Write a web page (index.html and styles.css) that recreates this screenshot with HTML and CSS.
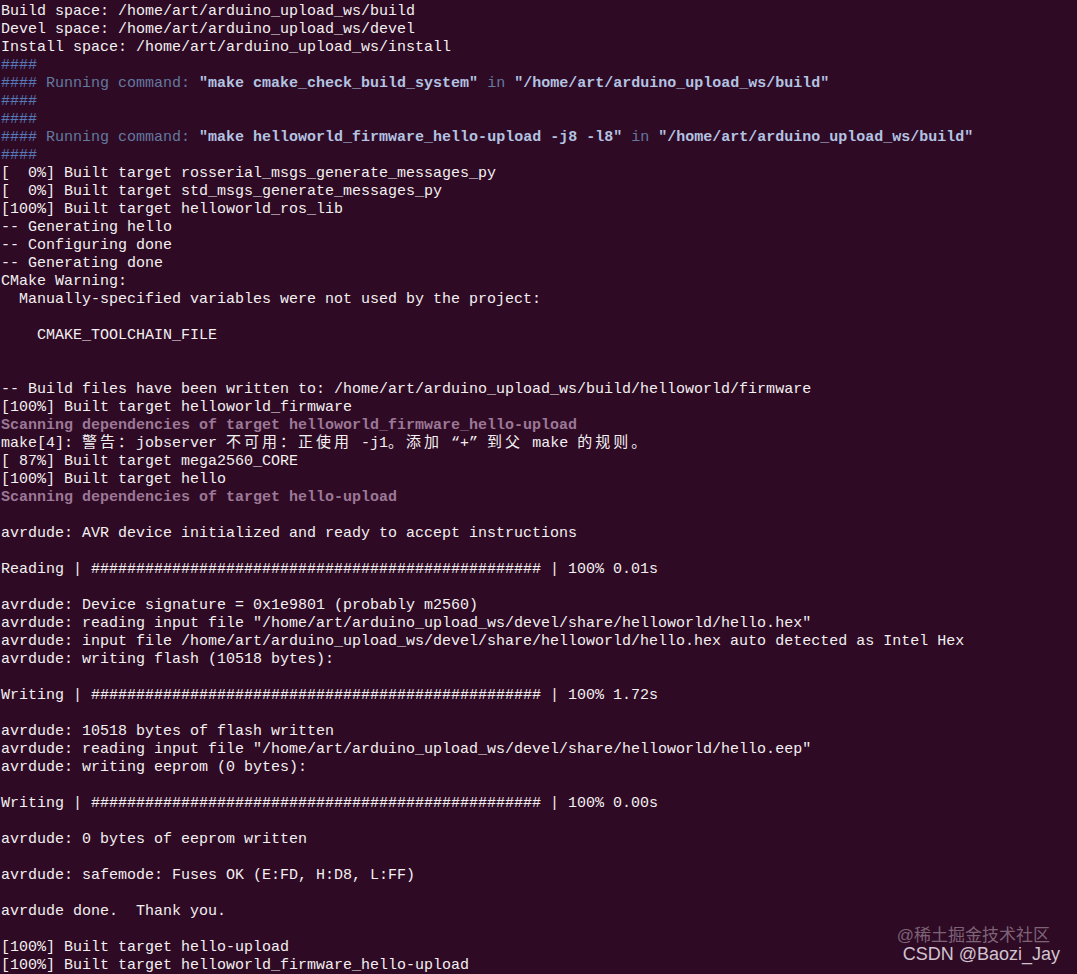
FILE: index.html
```html
<!DOCTYPE html>
<html lang="en">
<head>
<meta charset="utf-8">
<title>Terminal</title>
<link rel="stylesheet" href="styles.css">
</head>
<body>
<div class="term">
<pre class="out">Build space: /home/art/arduino_upload_ws/build
Devel space: /home/art/arduino_upload_ws/devel
Install space: /home/art/arduino_upload_ws/install
<span class="h">####</span>
<span class="h">####</span> <span class="rc">Running command:</span> <span class="cmd">"make cmake_check_build_system"</span> <span class="rc">in</span> <span class="cmd">"/home/art/arduino_upload_ws/build"</span>
<span class="h">####</span>
<span class="h">####</span>
<span class="h">####</span> <span class="rc">Running command:</span> <span class="cmd">"make helloworld_firmware_hello-upload -j8 -l8"</span> <span class="rc">in</span> <span class="cmd">"/home/art/arduino_upload_ws/build"</span>
<span class="h">####</span>
[  0%] Built target rosserial_msgs_generate_messages_py
[  0%] Built target std_msgs_generate_messages_py
[100%] Built target helloworld_ros_lib
-- Generating hello
-- Configuring done
-- Generating done
CMake Warning:
  Manually-specified variables were not used by the project:

    CMAKE_TOOLCHAIN_FILE


-- Build files have been written to: /home/art/arduino_upload_ws/build/helloworld/firmware
[100%] Built target helloworld_firmware
<span class="scan">Scanning dependencies of target helloworld_firmware_hello-upload</span>
make[4]: <span class="cjk">警告：</span>jobserver <span class="cjk">不可用：正使用</span> -j1<span class="cjk">。添加</span> “+” <span class="cjk">到父</span> make <span class="cjk">的规则。</span>
[ 87%] Built target mega2560_CORE
[100%] Built target hello
<span class="scan">Scanning dependencies of target hello-upload</span>

avrdude: AVR device initialized and ready to accept instructions

Reading | ################################################## | 100% 0.01s

avrdude: Device signature = 0x1e9801 (probably m2560)
avrdude: reading input file "/home/art/arduino_upload_ws/devel/share/helloworld/hello.hex"
avrdude: input file /home/art/arduino_upload_ws/devel/share/helloworld/hello.hex auto detected as Intel Hex
avrdude: writing flash (10518 bytes):

Writing | ################################################## | 100% 1.72s

avrdude: 10518 bytes of flash written
avrdude: reading input file "/home/art/arduino_upload_ws/devel/share/helloworld/hello.eep"
avrdude: writing eeprom (0 bytes):

Writing | ################################################## | 100% 0.00s

avrdude: 0 bytes of eeprom written

avrdude: safemode: Fuses OK (E:FD, H:D8, L:FF)

avrdude done.  Thank you.

[100%] Built target hello-upload
[100%] Built target helloworld_firmware_hello-upload</pre>
<div class="wm">
<div class="wm1">@稀土掘金技术社区</div>
<div class="wm2">CSDN @Baozi_Jay</div>
</div>
</div>
</body>
</html>
```
FILE: styles.css
```css
html, body {
  margin: 0;
  padding: 0;
  background: #2f0a24;
}
.term {
  position: relative;
  width: 1077px;
  height: 974px;
  overflow: hidden;
  background: #2f0a24;
}
.out {
  margin: 0;
  padding: 3px 0 0 1px;
  font-family: "Liberation Mono", "DejaVu Sans Mono", monospace;
  font-size: 15px;
  line-height: 18px;
  color: #f2f0f1;
  white-space: pre;
}
.h {
  color: #5679b8;
}
.rc {
  color: #6379a0;
}
.cmd {
  color: #b3c3e2;
  font-weight: bold;
}
.scan {
  color: #9c7897;
  font-weight: bold;
}
.cjk {
  font-family: "Noto Sans CJK SC", sans-serif;
  font-size: 15px;
  line-height: 12px;
  letter-spacing: 3px;
}
.wm {
  position: absolute;
  right: 17px;
  bottom: 11px;
  display: flex;
  flex-direction: column;
  align-items: flex-end;
  font-family: "Liberation Sans", "Noto Sans CJK SC", sans-serif;
  line-height: 18px;
}
.wm1 {
  font-size: 17px;
  line-height: 18px;
  color: #7d6377;
  margin-right: 10px;
}
.wm2 {
  font-size: 18px;
  line-height: 18px;
  color: #d2c3d0;
}
```
